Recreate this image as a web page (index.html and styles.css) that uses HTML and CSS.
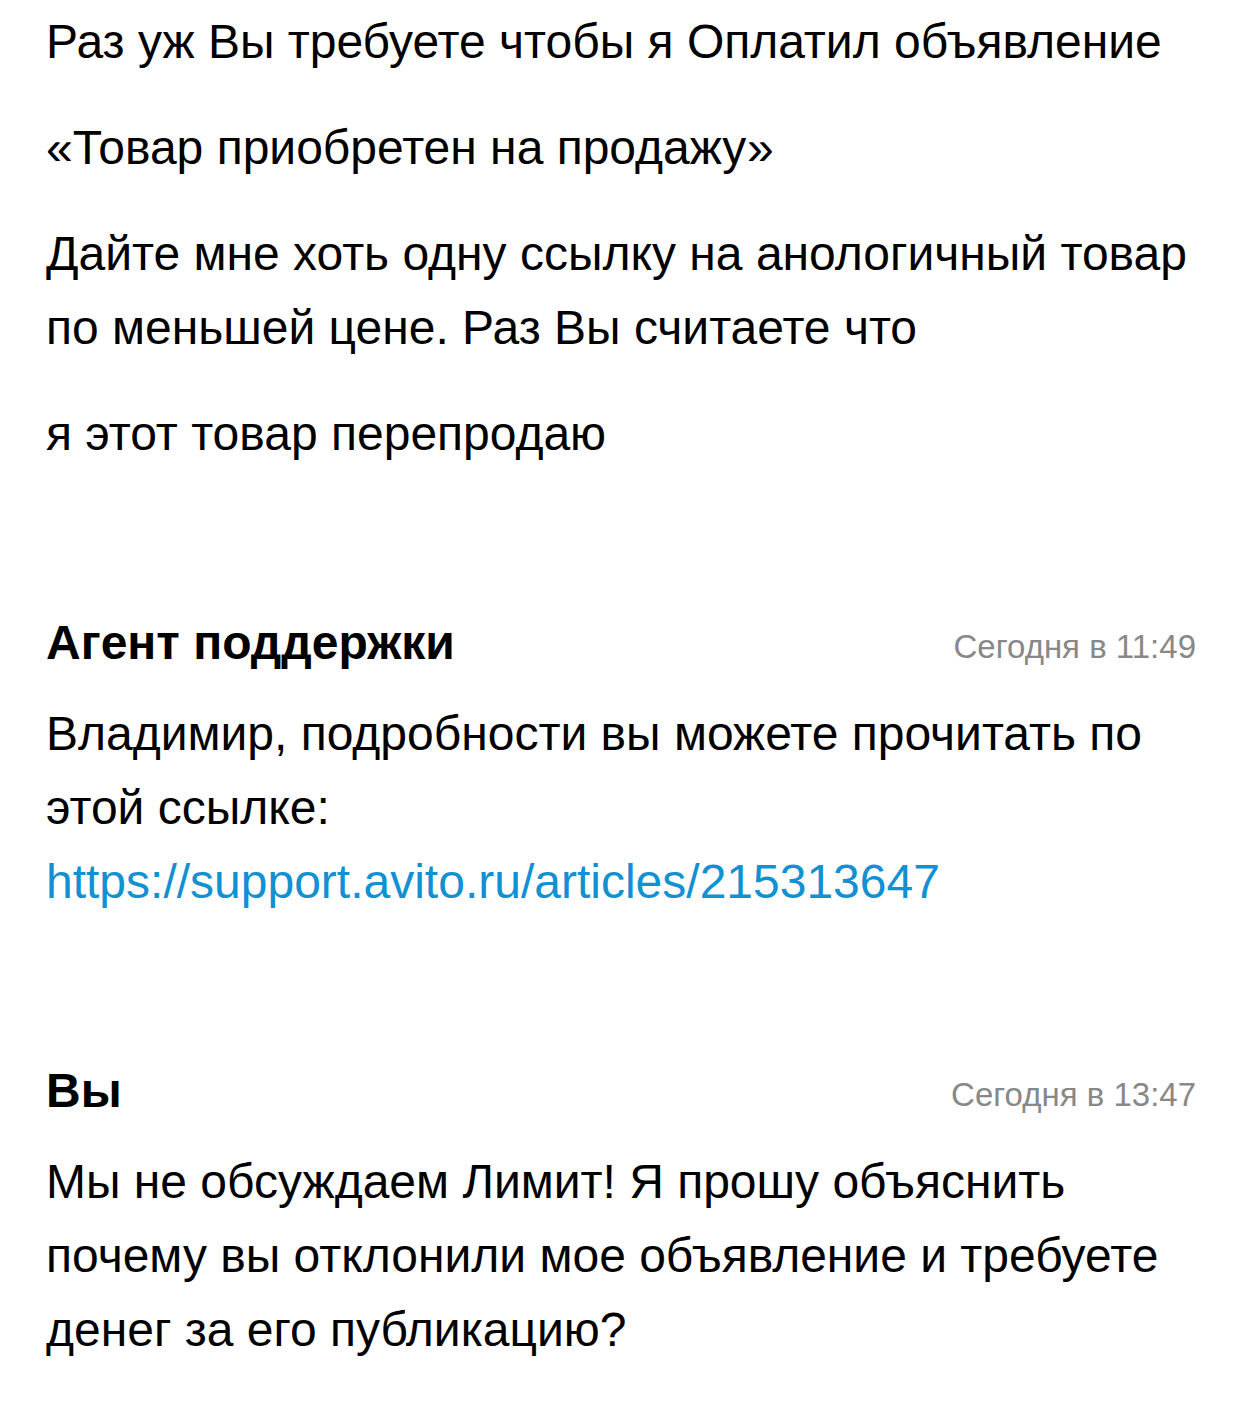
FILE: index.html
```html
<!DOCTYPE html>
<html lang="ru">
<head>
<meta charset="utf-8">
<link rel="stylesheet" href="styles.css">
</head>
<body>
<div class="chat">
  <div class="msg first">
    <p class="text">Раз уж Вы требуете чтобы я Оплатил объявление</p>
    <p class="text">«Товар приобретен на продажу»</p>
    <p class="text">Дайте мне хоть одну ссылку на анологичный товар по меньшей цене. Раз Вы считаете что</p>
    <p class="text">я этот товар перепродаю</p>
  </div>
  <div class="msg">
    <div class="head"><span class="author">Агент поддержки</span><span class="time">Сегодня в 11:49</span></div>
    <p class="text">Владимир, подробности вы можете прочитать по этой ссылке: <a class="link" href="#">https://support.avito.ru/articles/215313647</a></p>
  </div>
  <div class="msg">
    <div class="head"><span class="author">Вы</span><span class="time">Сегодня в 13:47</span></div>
    <p class="text">Мы не обсуждаем Лимит! Я прошу объяснить почему вы отклонили мое объявление и требуете денег за его публикацию?</p>
  </div>
</div>
</body>
</html>
```
FILE: styles.css
```css
html, body {
  margin: 0;
  padding: 0;
  background: #ffffff;
}
body {
  font-family: "Liberation Sans", Arial, sans-serif;
  color: #000000;
}
.chat {
  padding: 5px 46px 0 46px;
  display: flex;
  flex-direction: column;
  gap: 134px;
}
.msg {
  display: flex;
  flex-direction: column;
}
.first {
  gap: 32px;
}
.text {
  margin: 0;
  font-size: 48px;
  line-height: 74px;
}
.head {
  display: flex;
  justify-content: space-between;
  align-items: center;
  height: 75px;
  margin-bottom: 17px;
}
.author {
  font-weight: bold;
  font-size: 48px;
}
.time {
  font-size: 33px;
  color: #888888;
  padding-top: 8px;
}
.link {
  color: #1190d2;
  text-decoration: none;
}
```
